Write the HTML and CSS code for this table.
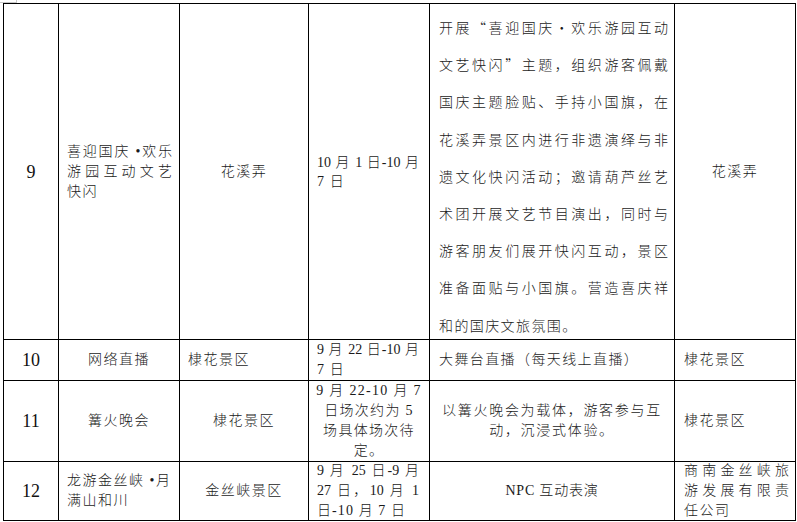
FILE: index.html
```html
<!DOCTYPE html>
<html lang="zh-CN">
<head>
<meta charset="utf-8">
<title>活动安排表</title>
<link rel="stylesheet" href="styles.css">
</head>
<body>
<div class="corner"></div>
<div class="sheet">
  <!-- row 9 -->
  <div class="cell num">9</div>
  <div class="cell lft c2">
    <span class="ln jl">喜迎国庆 •欢乐</span>
    <span class="ln jl">游园互动文艺</span>
    <span class="ln">快闪</span>
  </div>
  <div class="cell ctr">花溪弄</div>
  <div class="cell lft c4 lh19">
    <span class="ln jl">10 月 1 日-10 月</span>
    <span class="ln">7 日</span>
  </div>
  <div class="cell desc">
    <span class="dl jl">开展“喜迎国庆•欢乐游园互动</span>
    <span class="dl jl">文艺快闪”主题，组织游客佩戴</span>
    <span class="dl jl">国庆主题脸贴、手持小国旗，在</span>
    <span class="dl jl">花溪弄景区内进行非遗演绎与非</span>
    <span class="dl jl">遗文化快闪活动；邀请葫芦丝艺</span>
    <span class="dl jl">术团开展文艺节目演出，同时与</span>
    <span class="dl jl">游客朋友们展开快闪互动，景区</span>
    <span class="dl jl">准备面贴与小国旗。营造喜庆祥</span>
    <span class="dl">和的国庆文旅氛围。</span>
  </div>
  <div class="cell ctr">花溪弄</div>

  <!-- row 10 -->
  <div class="cell num">10</div>
  <div class="cell ctr">网络直播</div>
  <div class="cell lft c3">棣花景区</div>
  <div class="cell lft c4">
    <span class="ln jl">9 月 22 日-10 月</span>
    <span class="ln">7 日</span>
  </div>
  <div class="cell lft c5">大舞台直播（每天线上直播）</div>
  <div class="cell lft c6">棣花景区</div>

  <!-- row 11 -->
  <div class="cell num">11</div>
  <div class="cell ctr">篝火晚会</div>
  <div class="cell ctr">棣花景区</div>
  <div class="cell ctr wide4">
    <span class="ln">9 月 22-10 月 7</span>
    <span class="ln">日场次约为 5</span>
    <span class="ln">场具体场次待</span>
    <span class="ln">定。</span>
  </div>
  <div class="cell ctr wide">
    <span class="ln">以篝火晚会为载体，游客参与互</span>
    <span class="ln">动，沉浸式体验。</span>
  </div>
  <div class="cell lft c6">棣花景区</div>

  <!-- row 12 -->
  <div class="cell num">12</div>
  <div class="cell lft c2">
    <span class="ln">龙游金丝峡 •月</span>
    <span class="ln">满山和川</span>
  </div>
  <div class="cell ctr">金丝峡景区</div>
  <div class="cell lft c4">
    <span class="ln jl">9 月 25 日-9 月</span>
    <span class="ln jl">27 日，10 月 1</span>
    <span class="ln">日-10 月 7 日</span>
  </div>
  <div class="cell ctr npc">NPC 互动表演</div>
  <div class="cell lft c6">
    <span class="ln jl">商南金丝峡旅</span>
    <span class="ln jl">游发展有限责</span>
    <span class="ln">任公司</span>
  </div>
</div>
</body>
</html>
```

FILE: styles.css
```css
html, body {
  margin: 0;
  padding: 0;
  background: #ffffff;
}

body {
  font-family: "Liberation Serif", "Noto Sans CJK SC", serif;
  font-size: 14px;
  color: #1a1a1a;
}

.corner {
  position: absolute;
  left: 0;
  top: 0;
  width: 16px;
  height: 2px;
  border-right: 1px solid #c8c8c8;
  border-bottom: 1px solid #c8c8c8;
}

.sheet {
  margin: 3px 0 0 3px;
  width: 791px;
  display: grid;
  grid-template-columns: 54px 120px 128px 120px 244px 120px;
  grid-template-rows: 335px 40px 80px 58px;
  gap: 1px;
  padding: 1px;
  background: #000000;
}

.cell {
  background: #ffffff;
  display: flex;
  flex-direction: column;
  justify-content: center;
  overflow: hidden;
  line-height: 20px;
  letter-spacing: 1.5px;
  font-weight: 300;
  white-space: nowrap;
}

.num {
  align-items: center;
  font-size: 18px;
  letter-spacing: 0;
  font-weight: 400;
  color: #111;
}

.ctr {
  align-items: center;
  text-align: center;
}

.lft {
  align-items: stretch;
  text-align: left;
}

.ln {
  display: block;
  white-space: nowrap;
}

.jl {
  text-align: justify;
  text-align-last: justify;
  letter-spacing: 0;
}

.c2 {
  padding: 0 7px 0 8px;
  letter-spacing: 1.5px;
}

.c3 {
  padding-left: 8px;
}

.c4 {
  padding: 0 10px 0 8px;
  letter-spacing: 1.1px;
}

.lh19 .ln {
  line-height: 19px;
}

.c5 {
  padding-left: 9px;
  letter-spacing: 1.4px;
}

.c6 {
  padding: 0 6px 0 9px;
}

.wide {
  letter-spacing: 1.7px;
}

.wide4 {
  letter-spacing: 1.3px;
}

.npc {
  letter-spacing: 0.8px;
}

.desc {
  justify-content: flex-start;
  padding: 5px 6px 0 9px;
  font-family: "Noto Sans CJK SC", sans-serif;
  letter-spacing: 1.4px;
}

.dl {
  display: block;
  line-height: 37.2px;
  white-space: nowrap;
}

.desc .jl {
  letter-spacing: 0;
}
```
